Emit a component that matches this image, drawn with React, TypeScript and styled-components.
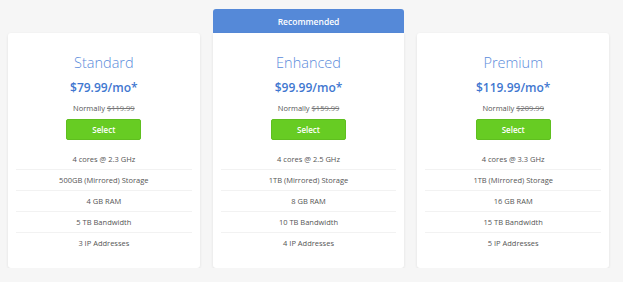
import React from 'react';
import styled, { createGlobalStyle } from 'styled-components';

const Global = createGlobalStyle`
  body {
    margin: 0;
    background: #f6f6f6;
    font-family: "Open Sans", "Liberation Sans", sans-serif;
  }
`;

const S = {
    Page: styled.div`
    display: flex;
    align-items: flex-end;
    gap: 13px;
    padding: 9px 14px 0 8px;
    height: 259px;
    `,
    Column: styled.div`
    flex: 1;
    display: flex;
    flex-direction: column;
    `,
    Banner: styled.div`
    height: 24px;
    background: #5589d8;
    border-radius: 3px 3px 0 0;
    color: #fff;
    font-size: 8.5px;
    font-weight: 600;
    display: flex;
    align-items: center;
    justify-content: center;
    `,
    Card: styled.div<{ $flat?: boolean }>`
    background: #fff;
    height: 235px;
    box-sizing: border-box;
    border-radius: ${p => (p.$flat ? '0 0 3px 3px' : '3px')};
    box-shadow: 0 1px 3px rgba(0, 0, 0, 0.09);
    padding: 20px 8px 14px;
    display: flex;
    flex-direction: column;
    align-items: center;
    `,
    Title: styled.div`
    font-size: 14.5px;
    font-weight: 300;
    line-height: 20px;
    color: #5b8cdb;
    `,
    Price: styled.div`
    margin-top: 6px;
    font-size: 12px;
    font-weight: 600;
    line-height: 18px;
    color: #3f77d0;
    `,
    Normal: styled.div`
    margin-top: 5px;
    font-size: 7.5px;
    line-height: 12px;
    color: #555;
    s {
        color: #777;
    }
    `,
    Button: styled.button`
    margin-top: 5px;
    width: 75px;
    height: 21px;
    border: 1px solid #5fbf1f;
    border-radius: 2px;
    background: #67cc23;
    color: #fff;
    font-family: inherit;
    font-size: 8px;
    font-weight: 600;
    padding: 0;
    `,
    List: styled.div`
    margin-top: 9px;
    align-self: stretch;
    display: flex;
    flex-direction: column;
    `,
    Item: styled.div`
    height: 20px;
    display: flex;
    align-items: center;
    justify-content: center;
    font-size: 7.5px;
    color: #555;
    border-bottom: 1px solid #f2f2f2;
    &:last-child {
        border-bottom: none;
    }
    `,
};

const plans = [
    { name: 'Standard', price: '$79.99', normal: '$119.99', features: ['4 cores @ 2.3 GHz', '500GB (Mirrored) Storage', '4 GB RAM', '5 TB Bandwidth', '3 IP Addresses'] },
    { name: 'Enhanced', price: '$99.99', normal: '$159.99', recommended: true, features: ['4 cores @ 2.5 GHz', '1TB (Mirrored) Storage', '8 GB RAM', '10 TB Bandwidth', '4 IP Addresses'] },
    { name: 'Premium', price: '$119.99', normal: '$209.99', features: ['4 cores @ 3.3 GHz', '1TB (Mirrored) Storage', '16 GB RAM', '15 TB Bandwidth', '5 IP Addresses'] },
];

const App = () => {
    return <>
        <Global />
        <S.Page>
            {plans.map(p => <S.Column key={p.name}>
                {p.recommended && <S.Banner>Recommended</S.Banner>}
                <S.Card $flat={p.recommended}>
                    <S.Title>{p.name}</S.Title>
                    <S.Price>{p.price}/mo*</S.Price>
                    <S.Normal>Normally <s>{p.normal}</s></S.Normal>
                    <S.Button>Select</S.Button>
                    <S.List>{p.features.map(f => <S.Item key={f}>{f}</S.Item>)}</S.List>
                </S.Card>
            </S.Column>)}
        </S.Page>
    </>
}

export default App;
